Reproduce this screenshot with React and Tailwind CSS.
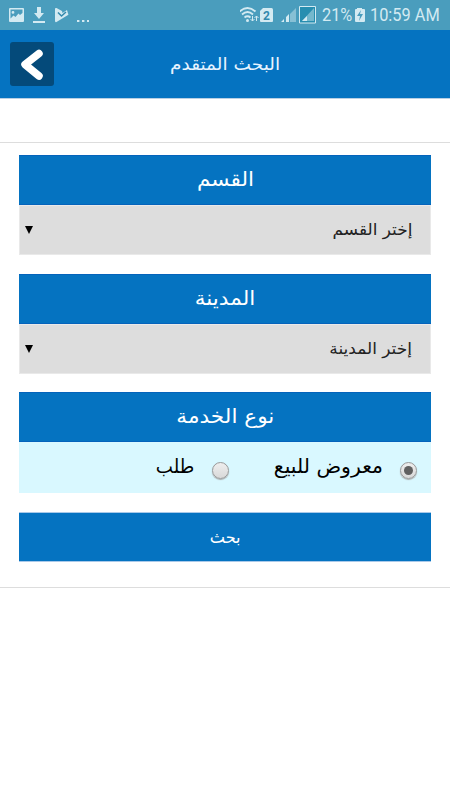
import { useState } from "react";

const StatusBar = () => (
  <div className="flex h-[30px] items-center justify-between bg-[#4a9dbd] text-[#d3eaf2]" dir="ltr">
    <div className="flex h-full items-center pl-[9px]">
      <svg width="90" height="30" viewBox="0 0 90 30" fill="none">
        {/* Picture */}
        <path
          fill="currentColor"
          fillRule="evenodd"
          d="M1 8h13q1 0 1 1v12q0 1-1 1H1q-1 0-1-1V9q0-1 1-1ZM1.500 9.500v9l3-3 2 1.500 3-3.500 1.500 1.500 2.500-2v-3.500ZM4 11a1.400 1.400 0 1 1 0 2.800 1.400 1.400 0 0 1 0-2.800Z"
        />
        {/* Download */}
        <path fill="currentColor" d="M28 7h4v6h3l-5 6-5-6h3ZM24 21h12v2H24Z" />
        {/* Play */}
        <path fill="currentColor" d="M46 9q0-1.500 1.500-1l5.500 3 .5 2 4.500-3 1 3.500q1 .7 0 1.500l-11.500 7q-1.500 .5-1.500-1Z" />
        <path d="m49 12.500 3.500 3.500 4.500-4" stroke="#3389ad" strokeWidth="1.500" />
      </svg>
      <svg width="12" height="30" viewBox="0 0 12 30" className="-ml-[22px]">
        <path fill="currentColor" d="M0 20h2.400v2H0ZM5 20h2.400v2H5ZM10 20h2v2h-2Z" />
      </svg>
    </div>

    <div className="flex h-full items-center pr-[10px]">
      <svg width="82" height="30" viewBox="0 0 82 30" fill="none">
        {/* Wifi */}
        <g stroke="currentColor" strokeWidth="1.800">
          <path d="M-.5 11.500q8-7 16 0M2 14.500q5.500-5 11 0M4.500 17.500q3-2.500 6 0" />
        </g>
        <circle cx="7.500" cy="20.500" r="1.500" fill="currentColor" />
        <path d="M12.500 16v5m-2-2 2 2 2-2M16.500 21v-5m-2 2 2-2 2 2" stroke="currentColor" />
        {/* Sim card */}
        <path fill="currentColor" d="M23 8h8.500q1.500 0 1.500 1.500V21q0 1-1 1H21q-1 0-1-1V11Z" />
        <text x="26.500" y="19.500" textAnchor="middle" className="fill-[#3389ad] font-[Roboto] text-[12px] font-bold">
          2
        </text>
        {/* Signals */}
        <path fill="currentColor" d="M41 22h3v-3ZM46 22h3v-8l-3 3Z" />
        <path fill="currentColor" opacity=".45" d="M50 22h6V8l-6 6Z" />
        <path fill="#278eb0" stroke="currentColor" d="M59.500 6.500h16v16.500h-16Z" />
        <path fill="currentColor" opacity=".45" d="M62 21h12V8Z" />
        <path fill="currentColor" d="M62 21h5v-5Z" />
      </svg>
      <span className="w-[31px] font-[Roboto] text-[19px] leading-[30px]">
        <span className="block origin-left scale-x-[0.86] whitespace-nowrap">21%</span>
      </span>
      <svg width="13" height="30" viewBox="0 0 13 30">
        <path fill="currentColor" d="M4 8h5v1h2q1 0 1 1v11q0 1-1 1H3q-1 0-1-1V10q0-1 1-1h1Z" />
        <path fill="#4a9dbd" d="m8 10-4 6h3l-1 5 4-7H7Z" />
      </svg>
      <span className="ml-[4px] w-[70px] font-[Roboto] text-[19px] leading-[30px]">
        <span className="block origin-left scale-x-[0.86] whitespace-nowrap">10:59 AM</span>
      </span>
    </div>
  </div>
);

const SectionTitle = ({ children }) => (
  <h2 className="h-[50px] border-y border-y-[#0563bb] bg-[#0573c1] text-center text-[20px] leading-[46px] text-white">
    <span className="inline-block scale-x-[1.08]">{children}</span>
  </h2>
);

const SelectRow = ({ label }) => (
  <button className="flex h-[50px] w-full items-center justify-between border border-[#e9e9e9] bg-[#ddd] pr-[18px] pl-[5px] text-[16px] text-[#222]">
    <span className="origin-right scale-x-[1.06]">{label}</span>
    <svg width="8" height="8" viewBox="0 0 8 8">
      <path d="M0 0h8L4 8Z" fill="#000" />
    </svg>
  </button>
);

const Radio = ({ checked, onClick }) => (
  <button
    role="radio"
    aria-checked={checked}
    onClick={onClick}
    className="mt-[6px] flex size-[17px] items-center justify-center rounded-full border border-[#999] bg-linear-to-b from-[#eee] to-[#d9d9d9] shadow-[0_1px_1px_#aaa]"
  >
    {checked && <span className="size-[9px] rounded-full bg-[#606060]" />}
  </button>
);

const App = () => {
  const [type, setType] = useState("sale");

  return (
    <div className="min-h-screen bg-white font-['DejaVu_Sans',sans-serif]" dir="rtl">
      <StatusBar />

      {/* Header */}
      <header
        className="grid h-[69px] grid-cols-[44px_1fr_44px] items-center border-b border-[#b9cfe4] bg-[#0573c1] px-[10px]"
        dir="ltr"
      >
        <button className="flex size-[44px] items-center justify-center rounded-[3px] bg-[#044a7a]">
          <svg width="44" height="44" viewBox="0 0 44 44" fill="none">
            <path d="M29 11.500 15 22.500l14 11.500" stroke="#fff" strokeWidth="7.500" strokeLinecap="round" strokeLinejoin="round" />
          </svg>
        </button>
        <h1 className="scale-x-[1.09] pt-[2px] text-center text-[17px] text-[#e8f4ff]" dir="rtl">
          البحث المتقدم
        </h1>
      </header>

      <main className="mt-[43px] flex h-[446px] flex-col border-y border-[#ddd] px-[19px] pt-[12px]">
        <section>
          <SectionTitle>القسم</SectionTitle>
          <SelectRow label="إختر القسم" />
        </section>

        <section className="mt-[19px]">
          <SectionTitle>المدينة</SectionTitle>
          <SelectRow label="إختر المدينة" />
        </section>

        <section className="mt-[18px]">
          <SectionTitle>نوع الخدمة</SectionTitle>
          <div className="flex h-[51px] items-center bg-[#d9f8ff] pr-[14px] text-[20px] text-black">
            <Radio checked={type === "sale"} onClick={() => setType("sale")} />
            <span className="mr-[17px] w-[110px] origin-right scale-x-[1.02] whitespace-nowrap pb-[4px]">معروض للبيع</span>
            <span className="mr-[44px] flex items-center">
              <Radio checked={type === "request"} onClick={() => setType("request")} />
              <span className="mr-[18px] origin-right scale-x-[0.91] whitespace-nowrap pb-[4px]">طلب</span>
            </span>
          </div>
        </section>

        <button className="mt-[19px] h-[50px] w-full border-y border-[#a9c9e9] bg-[#0573c1] pt-[2px] text-[17px] text-white">
          <span className="inline-block scale-x-[0.95]">بحث</span>
        </button>
      </main>
    </div>
  );
};

export default App;
